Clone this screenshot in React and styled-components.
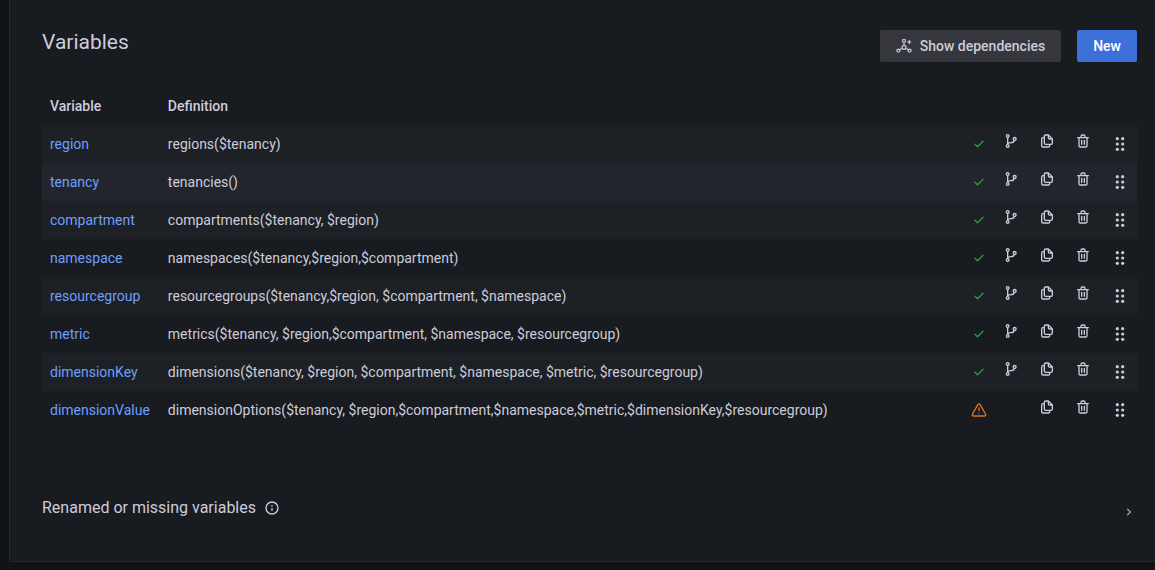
import React from "react";
import styled, { createGlobalStyle, css } from "styled-components";

const color = {
  canvas: "#111217",
  panel: "#181b1f",
  border: "#25272c",
  text: "#ccccdc",
  link: "#6e9fff",
  primary: "#3d71d9",
  secondary: "#35373d",
  stripe: "#1d2024",
  hover: "#22252b",
  success: "#299c46",
  warning: "#e0751a",
  muted: "#9a9ba8",
};

const GlobalStyle = createGlobalStyle`
  * { box-sizing: border-box; }
  body {
    margin: 0;
    background: ${color.canvas};
    color: ${color.text};
    font: 400 14px/22px Roboto, "Liberation Sans", sans-serif;
  }
`;

const Page = styled.div`
  min-height: 100vh;
  padding: 0 0 8px 9px;
  display: flex;
  background: ${color.canvas};
`;

const Panel = styled.main`
  flex: 1;
  min-width: 0;
  padding: 30px 18px 32px 32px;
  background: ${color.panel};
  border: solid ${color.border};
  border-width: 0 0 1px 1px;
  border-bottom-left-radius: 2px;
`;

const Header = styled.header`
  display: flex;
  justify-content: space-between;
  align-items: flex-start;
`;

const Title = styled.h3`
  margin: 0;
  font-size: 21px;
  line-height: 24px;
  font-weight: 400;
`;

const ButtonGroup = styled.div`
  display: flex;
  gap: 16px;
`;

const Button = styled.button`
  height: 32px;
  padding: 0 16px;
  display: inline-flex;
  align-items: center;
  gap: 8px;
  border: 0;
  border-radius: 2px;
  font: inherit;
  font-weight: 500;
  cursor: pointer;
  color: ${(p) => (p.$primary ? "#ffffff" : color.text)};
  background: ${(p) => (p.$primary ? color.primary : color.secondary)};
`;

const Table = styled.table`
  width: 100%;
  margin-top: 25px;
  border-collapse: collapse;
`;

const Row = styled.tr`
  height: 38px;
  ${(p) => p.$striped && css`background: ${color.stripe};`}
  ${(p) => p.$active && css`background: ${color.hover};`}
`;

const HeadCell = styled.th`
  padding: 0 8px;
  text-align: left;
  font-weight: 500;
  white-space: nowrap;
`;

const Cell = styled.td`
  padding: 0 8px;
  white-space: nowrap;
  width: ${(p) => (p.$grow ? "100%" : "auto")};
`;

const NameCell = styled(Cell)`
  padding-right: 10px;
`;

const VariableLink = styled.a`
  color: ${color.link};
  text-decoration: none;
`;

const Actions = styled.div`
  height: 38px;
  display: grid;
  grid-template-columns: 20px 16px 16px 16px 18px;
  column-gap: 20px;
  align-items: center;
`;

const Status = styled.span`
  display: flex;
  justify-content: flex-end;
  margin-right: -4px;
  color: ${(p) => (p.$ok ? color.success : color.warning)};
`;

const IconButton = styled.button`
  display: flex;
  justify-content: center;
  padding: 0 0 ${(p) => (p.$handle ? "0" : "6px")};
  border: 0;
  background: none;
  color: inherit;
  cursor: ${(p) => (p.$handle ? "move" : "pointer")};
`;

const Svg = styled.svg`
  display: block;
  flex: none;
  width: ${(p) => p.$size}px;
  height: ${(p) => p.$size}px;
  fill: currentColor;
`;

const Section = styled.section`
  margin-top: 67px;
  display: flex;
  justify-content: space-between;
  align-items: center;
`;

const SectionTitle = styled.h4`
  margin: 0;
  display: flex;
  align-items: center;
  gap: 8px;
  font-size: 16px;
  line-height: 24px;
  font-weight: 400;
`;

const Toggle = styled.button`
  padding: 8px 0 0;
  border: 0;
  background: none;
  color: ${color.muted};
  cursor: pointer;
`;

const paths = {
  check:
    "M18.71,7.21a1,1,0,0,0-1.42,0L9.84,14.67,6.71,11.53A1,1,0,1,0,5.29,13l3.84,3.84a1,1,0,0,0,1.42,0l8.16-8.16A1,1,0,0,0,18.71,7.21Z",
  copy:
    "M21,8.94a1.31,1.31,0,0,0-.06-.27l0-.09a1.07,1.07,0,0,0-.19-.28h0l-6-6h0a1.07,1.07,0,0,0-.28-.19.32.32,0,0,0-.09,0A.88.88,0,0,0,14.05,2H10A3,3,0,0,0,7,5V6H6A3,3,0,0,0,3,9V19a3,3,0,0,0,3,3h8a3,3,0,0,0,3-3V18h1a3,3,0,0,0,3-3V9S21,9,21,8.94ZM15,5.41,17.59,8H16a1,1,0,0,1-1-1ZM15,19a1,1,0,0,1-1,1H6a1,1,0,0,1-1-1V9A1,1,0,0,1,6,8H7v7a3,3,0,0,0,3,3h5Zm4-4a1,1,0,0,1-1,1H10a1,1,0,0,1-1-1V5a1,1,0,0,1,1-1h3V7a3,3,0,0,0,3,3h3Z",
  trash:
    "M10,18a1,1,0,0,0,1-1V11a1,1,0,0,0-2,0v6A1,1,0,0,0,10,18ZM20,6H16V5a3,3,0,0,0-3-3H11A3,3,0,0,0,8,5V6H4A1,1,0,0,0,4,8H5V19a3,3,0,0,0,3,3h8a3,3,0,0,0,3-3V8h1a1,1,0,0,0,0-2ZM10,5a1,1,0,0,1,1-1h2a1,1,0,0,1,1,1V6H10Zm7,14a1,1,0,0,1-1,1H8a1,1,0,0,1-1-1V8H17Zm-3-1a1,1,0,0,0,1-1V11a1,1,0,0,0-2,0v6A1,1,0,0,0,14,18Z",
  warning:
    "M12,16a1,1,0,1,0,1,1A1,1,0,0,0,12,16Zm10.67,1.47-8.05-14a3,3,0,0,0-5.24,0l-8,14A3,3,0,0,0,3.94,22H20.06a3,3,0,0,0,2.61-4.53Zm-1.73,2a1,1,0,0,1-.88.51H3.94a1,1,0,0,1-.88-.51,1,1,0,0,1,0-1l8-14a1,1,0,0,1,1.78,0l8.05,14A1,1,0,0,1,20.94,19.49ZM12,8a1,1,0,0,0-1,1v4a1,1,0,0,0,2,0V9A1,1,0,0,0,12,8Z",
  info:
    "M12,2A10,10,0,1,0,22,12,10,10,0,0,0,12,2Zm0,18a8,8,0,1,1,8-8A8,8,0,0,1,12,20Zm0-8.5a1,1,0,0,0-1,1v3a1,1,0,0,0,2,0v-3A1,1,0,0,0,12,11.5Zm0-4a1.25,1.25,0,1,0,1.25,1.25A1.25,1.25,0,0,0,12,7.5Z",
  angleRight:
    "M14.83,11.29,10.59,7.05a1,1,0,0,0-1.42,0,1,1,0,0,0,0,1.41L12.71,12,9.17,15.54a1,1,0,0,0,0,1.41,1,1,0,0,0,.71.29,1,1,0,0,0,.71-.29l4.24-4.24A1,1,0,0,0,14.83,11.29Z",
};

const Icon = ({ name, size = 16 }) => (
  <Svg $size={size} viewBox="0 0 24 24" aria-hidden="true">
    <path d={paths[name]} />
  </Svg>
);

const BranchIcon = () => (
  <Svg $size={16} viewBox="0 0 24 24" aria-hidden="true">
    <g fill="none" stroke="currentColor" strokeWidth="2">
      <circle cx="7" cy="4.5" r="2" />
      <circle cx="7" cy="19.5" r="2" />
      <circle cx="17.5" cy="9" r="2.2" />
      <path d="M7 6.5v11M17 11c-.6 2.600-2.500 3.500-5 3.500c-3 0-5 .5-5 3" />
    </g>
  </Svg>
);

const GripIcon = () => (
  <Svg $size={18} viewBox="0 0 18 18" aria-hidden="true">
    {[3.7, 9, 14.3].map((y) => (
      <React.Fragment key={y}>
        <circle cx="6.3" cy={y} r="1.6" />
        <circle cx="11.7" cy={y} r="1.6" />
      </React.Fragment>
    ))}
  </Svg>
);

const DependencyIcon = () => (
  <Svg $size={16} viewBox="0 0 16 16" aria-hidden="true">
    <g fill="none" stroke="currentColor" strokeWidth="1.2">
      <circle cx="8" cy="2.8" r="1.5" />
      <circle cx="2.4" cy="12.6" r="1.5" />
      <circle cx="13.6" cy="12.6" r="1.5" />
      <circle cx="8" cy="9.3" r="2" />
      <path d="M8 4.300v3M6.300 10.300L3.700 11.800M9.700 10.300l2.600 1.500M13.300 2v4M11.300 4h4" />
    </g>
  </Svg>
);

const variables = [
  { name: "region", definition: "regions($tenancy)", used: true },
  { name: "tenancy", definition: "tenancies()", used: true, active: true },
  { name: "compartment", definition: "compartments($tenancy, $region)", used: true },
  { name: "namespace", definition: "namespaces($tenancy,$region,$compartment)", used: true },
  { name: "resourcegroup", definition: "resourcegroups($tenancy,$region, $compartment, $namespace)", used: true },
  { name: "metric", definition: "metrics($tenancy, $region,$compartment, $namespace, $resourcegroup)", used: true },
  { name: "dimensionKey", definition: "dimensions($tenancy, $region, $compartment, $namespace, $metric, $resourcegroup)", used: true },
  { name: "dimensionValue", definition: "dimensionOptions($tenancy, $region,$compartment,$namespace,$metric,$dimensionKey,$resourcegroup)", used: false },
];

const VariableRow = ({ variable, index }) => (
  <Row $striped={index % 2 === 0} $active={variable.active}>
    <NameCell>
      <VariableLink href="#">{variable.name}</VariableLink>
    </NameCell>
    <Cell $grow>{variable.definition}</Cell>
    <Cell>
      <Actions>
        <Status $ok={variable.used}>
          <Icon name={variable.used ? "check" : "warning"} />
        </Status>
        {variable.used ? (
          <IconButton aria-label="Show usages"><BranchIcon /></IconButton>
        ) : (
          <span />
        )}
        <IconButton aria-label="Duplicate variable"><Icon name="copy" /></IconButton>
        <IconButton aria-label="Remove variable"><Icon name="trash" /></IconButton>
        <IconButton $handle aria-label="Reorder variable"><GripIcon /></IconButton>
      </Actions>
    </Cell>
  </Row>
);

export default function App() {
  return (
    <>
      <GlobalStyle />
      <Page>
        <Panel>
          <Header>
            <Title>Variables</Title>
            <ButtonGroup>
              <Button><DependencyIcon />Show dependencies</Button>
              <Button $primary>New</Button>
            </ButtonGroup>
          </Header>
          <Table>
            <thead>
              <Row>
                <HeadCell>Variable</HeadCell>
                <HeadCell colSpan={2}>Definition</HeadCell>
              </Row>
            </thead>
            <tbody>
              {variables.map((v, i) => (
                <VariableRow key={v.name} variable={v} index={i} />
              ))}
            </tbody>
          </Table>
          <Section>
            <SectionTitle>
              Renamed or missing variables
              <Icon name="info" />
            </SectionTitle>
            <Toggle aria-label="Expand section"><Icon name="angleRight" /></Toggle>
          </Section>
        </Panel>
      </Page>
    </>
  );
}
